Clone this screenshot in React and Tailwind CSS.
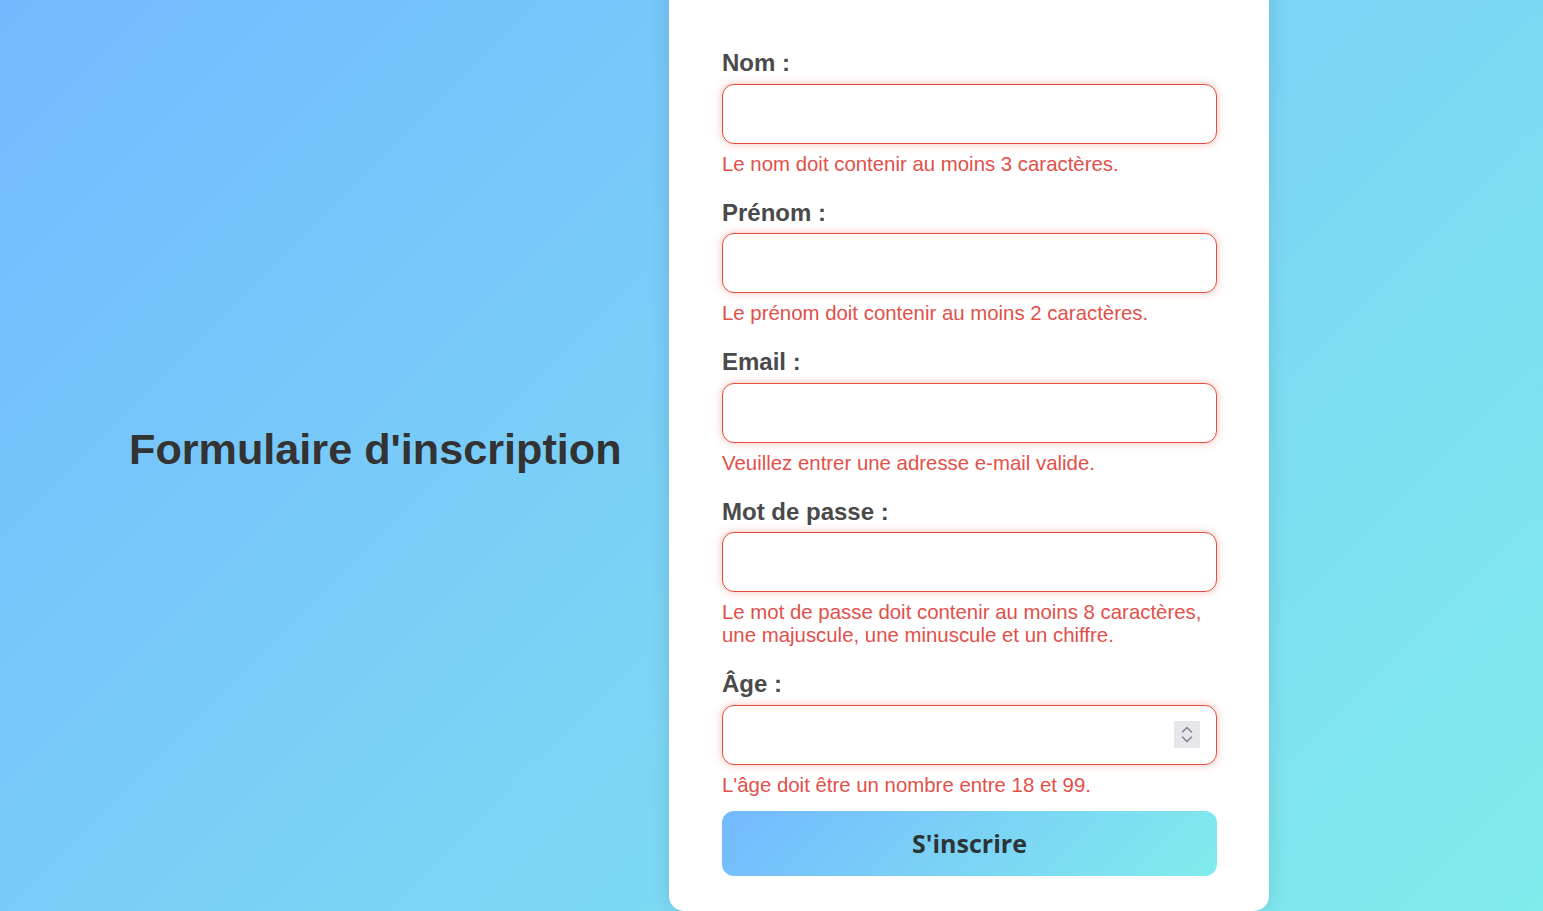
import React from "react";

const fields = [
  { label: "Nom :", error: ["Le nom doit contenir au moins 3 caractères."] },
  { label: "Prénom :", error: ["Le prénom doit contenir au moins 2 caractères."] },
  { label: "Email :", error: ["Veuillez entrer une adresse e-mail valide."] },
  {
    label: "Mot de passe :",
    error: [
      "Le mot de passe doit contenir au moins 8 caractères,",
      "une majuscule, une minuscule et un chiffre.",
    ],
  },
  { label: "Âge :", error: ["L'âge doit être un nombre entre 18 et 99."], number: true },
];

function Spinner() {
  return (
    <div className="absolute right-[17px] top-[16px] w-[26px] h-[27px] bg-[#e6e6eb] flex flex-col items-center justify-center gap-[3px]">
      <svg width="12" height="7" viewBox="0 0 12 7">
        <path d="M1.5 6 L6 1.5 L10.5 6" fill="none" stroke="#85858c" strokeWidth="1.6" strokeLinecap="round" strokeLinejoin="round" />
      </svg>
      <svg width="12" height="7" viewBox="0 0 12 7">
        <path d="M1.5 1 L6 5.5 L10.5 1" fill="none" stroke="#85858c" strokeWidth="1.6" strokeLinecap="round" strokeLinejoin="round" />
      </svg>
    </div>
  );
}

export default function App() {
  return (
    <div
      className="h-[911px] overflow-hidden flex items-center bg-[linear-gradient(135deg,#74b9ff,#81ecec)]"
      style={{ fontFamily: '"Liberation Sans", Arial, sans-serif' }}
    >
      <div className="w-[669px] shrink-0 pl-[129px] mb-[12px]">
        <h1 className="text-[43.2px] leading-[1.15] font-bold text-[#333333] whitespace-nowrap">
          Formulaire d'inscription
        </h1>
      </div>
      <div className="self-start -mt-[20px] w-[600px] shrink-0 bg-white rounded-[15px] shadow-[0_0_20px_rgba(0,0,0,0.12)] pt-[69px] pb-[35px] pl-[53px] pr-[52px]">
        <form className="flex flex-col" onSubmit={(e) => e.preventDefault()}>
          {fields.map((f, i) => (
            <div key={i} className={i < fields.length - 1 ? "mb-[23px]" : "mb-[14px]"}>
              <label className="block text-[24px] leading-[1.15] font-bold text-[#4a4a4a] mb-[7px]">
                {f.label}
              </label>
              <div className="relative">
                <input
                  type="text"
                  className="block w-full h-[60px] rounded-[12px] border border-[#e74c3c] bg-white shadow-[0_0_8px_rgba(231,76,60,0.35)] outline-none px-[15px] text-[20px]"
                />
                {f.number && <Spinner />}
              </div>
              <div className="mt-[9px] text-[20.4px] leading-[23px] text-[#e2504a]">
                {f.error.map((l, j) => (
                  <div key={j}>{l}</div>
                ))}
              </div>
            </div>
          ))}
          <button
            type="submit"
            className="w-full h-[65px] rounded-[12px] bg-[linear-gradient(135deg,#74b9ff,#81ecec)] text-[25px] font-bold text-[#2d3436]"
            style={{ fontFamily: '"Open Sans", sans-serif' }}
          >
            S'inscrire
          </button>
        </form>
      </div>
    </div>
  );
}
